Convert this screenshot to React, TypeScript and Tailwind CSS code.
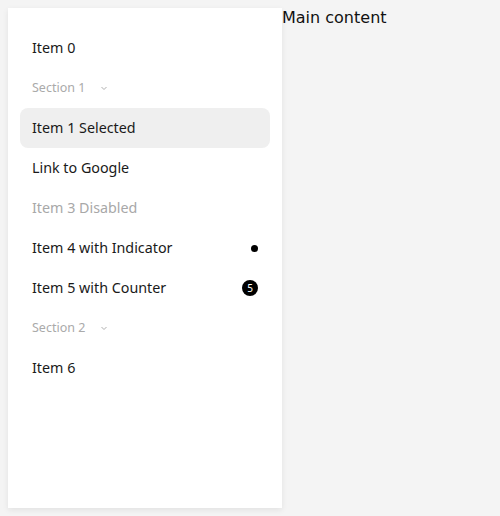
import React from "react";

const Chevron = () => (
  <svg width="8" height="8" viewBox="0 0 8 8" fill="none" className="ml-[15px]">
    <path d="M1.5 3 L4 5.5 L6.5 3" stroke="#b0b0b0" strokeWidth="1" />
  </svg>
);

const Item = ({ label, selected, disabled, right }: { label: string; selected?: boolean; disabled?: boolean; right?: React.ReactNode }) => (
  <div
    className={`flex h-10 items-center justify-between rounded-lg px-3 text-[14.3px] ${selected ? "bg-[#efefef]" : ""} ${disabled ? "text-[#a8a8a8]" : "text-[#1a1a1a]"}`}
  >
    <span className="pb-[1px]">{label}</span>
    {right}
  </div>
);

const Section = ({ label }: { label: string }) => (
  <div className="flex h-10 items-center px-3 text-[12.5px] text-[#aaaaaa]">
    <span>{label}</span>
    <Chevron />
  </div>
);

export default function App() {
  return (
    <div className="flex min-h-[516px] bg-[#f4f4f4] p-2 font-['DejaVu_Sans',sans-serif]">
      <nav className="flex h-[500px] w-[274px] shrink-0 flex-col bg-white px-3 pt-5 shadow-[0_2px_6px_rgba(0,0,0,0.08)] font-['Noto_Sans',sans-serif]">
        <Item label="Item 0" />
        <Section label="Section 1" />
        <Item label="Item 1 Selected" selected />
        <Item label="Link to Google" />
        <Item label="Item 3 Disabled" disabled />
        <Item label="Item 4 with Indicator" right={<span className="h-[7px] w-[7px] rounded-full bg-black" />} />
        <Item
          label="Item 5 with Counter"
          right={
            <span className="flex h-4 w-4 items-center justify-center rounded-full bg-black text-[10px] leading-none text-white">5</span>
          }
        />
        <Section label="Section 2" />
        <Item label="Item 6" />
      </nav>
      <main className="flex-1 text-[16px] leading-[19px] text-[#111]">Main content</main>
    </div>
  );
}
